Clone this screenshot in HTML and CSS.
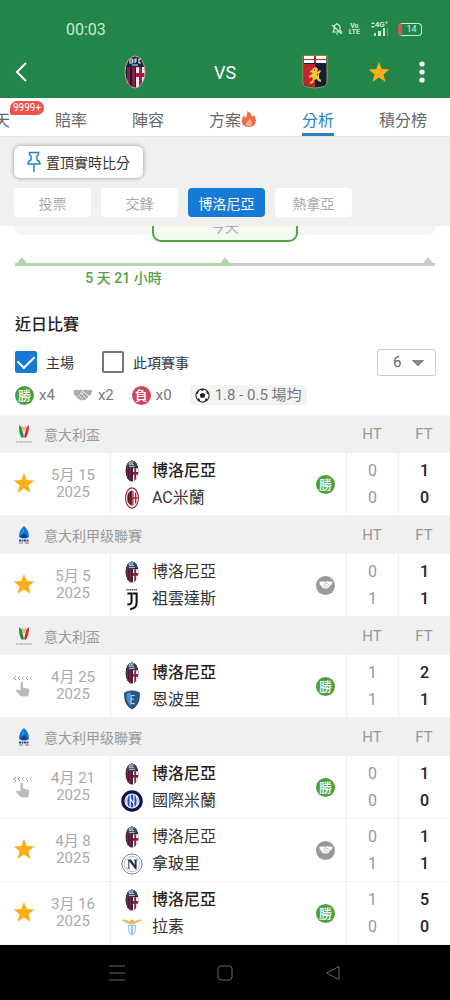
FILE: index.html
```html
<!DOCTYPE html>
<html lang="zh-Hant">
<head>
    <meta charset="UTF-8">
    <meta name="viewport" content="width=device-width, initial-scale=1.0">
    <title>博洛尼亞 VS 熱拿亞</title>
    <link rel="stylesheet" href="styles.css">
</head>
<body>
    <!-- Shared icons -->
    <svg class="sprite" aria-hidden="true">
        <symbol id="star" viewBox="0 0 24 24">
            <path fill="#ffae16" d="M12 1l3 7.700 8.200.5-6.300 5.300 2.100 8-7-4.500-7 4.500 2.100-8L.8 9.200 9 8.700z"/>
        </symbol>
        <symbol id="bologna" viewBox="0 0 22 34">
            <clipPath id="bologna-shape"><ellipse cx="11" cy="17" rx="10" ry="16"/></clipPath>
            <g clip-path="url(#bologna-shape)">
                <path fill="#171d38" d="M0 0h22v34H0z"/>
                <path fill="#8e1c3c" d="M3 12h3v22H3zM8 12h3v22H8z"/>
                <path fill="#f3eef0" d="M12 12h10v22H12z"/>
                <path fill="#a31e42" d="M15 12h3v22h-3zM12 18h10v4H12z"/>
                <path fill="#172a43" d="M0 0h22v9q-11 7-22 0z"/>
            </g>
            <path fill="none" stroke="#dfe6ef" stroke-width="1.200" d="M6 4v4h2q2-1 0-2 2-1 0-2zM13 4h-2v4M11 6h2M17 4h-2v4h2M8 10h6"/>
            <ellipse cx="11" cy="17" rx="10" ry="16" fill="none" stroke="#c8a5a5" stroke-width="1"/>
        </symbol>
        <symbol id="bologna-small" viewBox="0 0 16 24">
            <clipPath id="small-shape"><ellipse cx="8" cy="12" rx="7" ry="11.500"/></clipPath>
            <g clip-path="url(#small-shape)">
                <path fill="#1d2238" d="M0 0h16v24H0z"/>
                <path fill="#8e1c3c" d="M2 7h2v17H2zM5 7h2v17H5z"/>
                <path fill="#fff" d="M9 9h7v15H9z"/>
                <path fill="#8e1c3c" d="M10.500 9h2v15h-2zM9 13h7v3H9z"/>
                <path fill="#35495f" d="M0 0h16v6q-8 5-16 0z"/>
                <path fill="none" stroke="#c4d3df" d="M5 2v3h2V2zM10 2H8v3h2M5 7h6"/>
            </g>
        </symbol>
        <symbol id="genoa" viewBox="0 0 26 34">
            <path fill="#111f3e" stroke="#b59743" d="M1 1h24v26q0 4-5 5l-7 1-7-1q-5-1-5-5z"/>
            <path fill="#c3252e" d="M2 9h11v23l-7-1q-4-1-4-4z"/>
            <path fill="#fff" d="M2 1h22v7H2z"/>
            <path fill="#c3252e" d="M2 4h22v1H2zM12 1h2v7h-2z"/>
            <path fill="#f6c62c" d="M11 13l3-1 2 2-1 3 3-2 1 1-2 3v4l2 2v2l-3-1-1-2-3 1-1 3-3 1v-2l2-1 1-3-2-1-2 1v-2l3-2 1-1-2-1-1 1v-2l2-1z"/>
            <path fill="#a95f1e" d="M12 14h1v2h-1zM14 20l2-2v3z"/>
        </symbol>
        <symbol id="milan" viewBox="0 0 16 24">
            <ellipse cx="8" cy="12" rx="7" ry="11" fill="#fff" stroke="#a2202b" stroke-width="1.200"/>
            <path fill="#bb1d28" d="M8 3.500v17C1 19 1 5 8 3.500z"/>
            <path stroke="#251d20" d="M4 7v10M6.500 5v14"/>
            <path stroke="#bb1d28" stroke-width="1.500" d="M9 4v16M12 6v12M8 12h6"/>
        </symbol>
        <symbol id="juventus" viewBox="0 0 16 26">
            <path fill="none" stroke="#555" stroke-width="1.500" stroke-dasharray="1.500 .5" d="M2 3h12"/>
            <path fill="none" stroke="#111" stroke-width="2.200" d="M3 7h4.500v9q0 3-4.500 3M9 7h4v10q0 6-7 7"/>
        </symbol>
        <symbol id="empoli" viewBox="0 0 18 22">
            <path fill="#25588e" stroke="#17375f" d="M1 3q8-4 16 0 1 13-8 18Q0 16 1 3z"/>
            <path fill="#4f8bc0" d="M3 4q5-2 5-1v15Q2 13 3 4z"/>
            <path fill="none" stroke="#d9e9f6" d="M12 6H8v9h4M8 10h3"/>
        </symbol>
        <symbol id="inter" viewBox="0 0 24 24">
            <circle cx="12" cy="12" r="10" fill="#fff" stroke="#0b1646" stroke-width="3.500"/>
            <circle cx="12" cy="12" r="7" fill="#2a46c8"/>
            <path fill="none" stroke="#fff" stroke-width="1.300" d="M7.500 6q-2.500 6 0 12M10 5v14M14 5v14M16.500 6q2.500 6 0 12M10 9l4 6"/>
        </symbol>
        <symbol id="napoli" viewBox="0 0 24 24">
            <circle cx="12" cy="12" r="11" fill="#fff" stroke="#6c7a8d"/>
            <circle cx="12" cy="12" r="8.500" fill="none" stroke="#9aa6b5" stroke-width=".7"/>
            <path fill="#1c2d4a" d="M7 7h4l4 6V8h-1V7h4v1h-1v10h-1L9 9v7h1v1H7v-1h1V8H7z"/>
        </symbol>
        <symbol id="lazio" viewBox="0 0 24 20">
            <path fill="#e5c35c" d="M0 2q6-1 9 2l2-2h3l1 2q3-3 9-2-3 2-6 3l-4 2h-5L5 5Q2 4 0 2z"/>
            <path fill="#e8f5fb" stroke="#8ebbd0" d="M8 8h8v6q-1 4-4 5-3-1-4-5z"/>
            <path fill="#86c5e2" d="M11 8h2v10h-2z"/>
        </symbol>
        <symbol id="coppa" viewBox="0 0 18 20">
            <path fill="#26884a" d="M4 1.500q2 0 3 3.500l2 8-2 1Q4 11 4 1.500z"/>
            <path fill="#d82e35" d="M14 1.500q-2 0-3 3.500l-2 8 1.500 1q3.500-4 3.500-12.500z"/>
            <path fill="#e5b94a" d="M7 1l2 3 2-3v3L9 8 7 4z"/>
            <path stroke="#999" stroke-dasharray="2 .5" d="M1 18h16"/>
        </symbol>
        <symbol id="seriea" viewBox="0 0 18 20">
            <path fill="#1377d2" d="M9 1q5 4 5 11-5 3-10 0Q4 5 9 1z"/>
            <path fill="#29a9e0" d="M9 3L6 9q2 0 3-3z"/>
            <path fill="#0b3e9e" d="M9 8l-4 4q4 2 8 0z"/>
            <path stroke="#3c4778" stroke-width="2" stroke-dasharray="2 .5" d="M4 15.500h10"/>
            <path stroke="#c44" d="M10 18h4"/>
            <path stroke="#2a8" d="M4 18h4"/>
        </symbol>
        <symbol id="swipe" viewBox="0 0 20 22">
            <path fill="none" stroke="#999" d="M3 1L1 3l2 2M7 1L5 3l2 2"/>
            <path fill="none" stroke="#bbb" d="M11 1L9 3l2 2M15 1l-2 2 2 2M19 1l-2 2 2 2"/>
            <path fill="#bbb" d="M7.500 8q0-1.500 1.300-1.500T10 8v4.500l5 1q1.500.5 1.300 2L15.500 20q-.5 1.500-2 1.500H9q-1 0-2-1l-4-4.500q0-1.500 1.500-1.300l3 .8z"/>
        </symbol>
        <symbol id="handshake" viewBox="0 0 24 16">
            <path d="M0 3l4-2 2 1 3-1 3 1 3-1 3 1 2-1 4 2-3 6-2 0-1 3-2 1-2 2-2-.5-2 .5-2-1-2-1-2-2-1-2-2 0z"/>
            <path class="grip" d="M18.500 9l-5-4.200-2.500 2q-2 1-2-1l3-3M16 12l-4-3.500M6 10l2-2M8 12l2-2M10.500 13.500l1.500-2"/>
        </symbol>
    </svg>

    <header class="app-header">
        <div class="status-bar">
            <time>00:03</time>
            <div class="status-icons">
                <svg width="12" height="14" viewBox="0 0 12 14" fill="none" stroke="currentColor" stroke-width="1.200"><path d="M2 10h8.500L9 8V5.500Q9 3 6 2 3 3 3 5.500V8zM6 1v1M5 12h2M1 3l10 9"/></svg>
                <span class="volte"><span>Vo</span><span>LTE</span></span>
                <span class="signal">
                    <svg width="4" height="6" viewBox="0 0 4 6" fill="currentColor"><path d="M0 2l2-2 2 2zM0 4h4L2 6z"/></svg><span>4G⁺</span>
                    <svg width="14" height="8" viewBox="0 0 14 8" fill="currentColor"><path d="M0 5h2v3H0zM4 3h3v5H4zM9 0h2v8H9z"/><path opacity=".4" d="M13 0h1v8h-1z"/></svg>
                </span>
                <span class="battery">14</span>
            </div>
        </div>
        <div class="match-bar">
            <button class="back" aria-label="返回"><svg width="12" height="20" viewBox="0 0 12 20" fill="none" stroke="#fff" stroke-width="2"><path d="M11 1L2 10l9 9"/></svg></button>
            <svg width="22" height="34"><use href="#bologna"/></svg>
            <span class="versus">VS</span>
            <svg width="26" height="34"><use href="#genoa"/></svg>
            <button aria-label="收藏"><svg width="22" height="22"><use href="#star"/></svg></button>
            <button class="more" aria-label="更多"><svg width="6" height="24" viewBox="0 0 6 24" fill="#fff"><circle cx="3" cy="4" r="2.600"/><circle cx="3" cy="12" r="2.600"/><circle cx="3" cy="20" r="2.600"/></svg></button>
        </div>
    </header>

    <nav class="tabs">
        <a href="#">天<span class="count">9999+</span></a>
        <a href="#">賠率</a>
        <a href="#">陣容</a>
        <a href="#">方案<svg width="16" height="18" viewBox="0 0 16 18"><path fill="#ed6c43" d="M6 1q5 2 5 6l2-2q3 5 1 9-2 3-6 3-5 0-7-4-1-4 2-8l1 3Q7 5 6 1z"/><path fill="#f9b394" d="M8 8q4 4 2 8H6q-2-2 0-4 2-1 2-4z"/></svg></a>
        <a href="#" class="active">分析</a>
        <a href="#">積分榜</a>
    </nav>

    <div class="toolbar">
        <button class="pin">
            <svg width="14" height="22" viewBox="0 0 14 22" fill="none" stroke="#2683cb" stroke-width="1.500"><path d="M2.500 1.500h9v2L10 5v4q3 1 3 4H1q0-3 3-4V5L2.500 3.500zM7 13v8"/></svg>
            置頂實時比分
        </button>
        <div class="chips">
            <button>投票</button>
            <button>交鋒</button>
            <button class="selected">博洛尼亞</button>
            <button>熱拿亞</button>
        </div>
    </div>

    <main>
        <section class="schedule">
            <div class="days">
                <div class="days-track"></div>
                <div class="today">今天</div>
                <div class="days-track last"></div>
            </div>
            <div class="timeline">
                <span></span><span></span><span class="end"></span>
            </div>
            <p class="countdown">5 天 21 小時</p>
        </section>

        <section class="recent">
            <h2>近日比賽</h2>
            <form class="filters">
                <label><input type="checkbox" checked>主場</label>
                <label><input type="checkbox">此項賽事</label>
                <select aria-label="場數"><option>6</option></select>
            </form>
            <div class="summary">
                <span><i class="result win">勝</i>x4</span>
                <span><svg class="shake" width="20" height="14"><use href="#handshake"/></svg>x2</span>
                <span><i class="result loss">負</i>x0</span>
                <span class="average"><svg width="15" height="15" viewBox="0 0 16 16"><circle cx="8" cy="8" r="7" fill="#fff" stroke="#333" stroke-width="1.200"/><path fill="#222" d="M8 5l3 2-1 3.500H6L5 7zM5 1.500L8 3l3-1.500-3-1zM1 6l2 .5L4 3.500 3 3zM15 6l-2 .5-1-3 1-.5zM3 11l2 .5.5 3L3 13zM13 11l-2 .5-.5 3L13 13z"/></svg>1.8 - 0.5 場均</span>
            </div>

            <table class="matches">
                <colgroup>
                    <col class="col-fav"><col class="col-date"><col><col class="col-result"><col class="col-score"><col class="col-score">
                </colgroup>
                <tbody>
                    <tr class="league">
                        <th colspan="4"><div><svg width="18" height="20"><use href="#coppa"/></svg>意大利盃</div></th>
                        <th>HT</th><th>FT</th>
                    </tr>
                    <tr>
                        <td class="fav"><button aria-label="收藏"><svg width="22" height="22"><use href="#star"/></svg></button></td>
                        <td class="date">5月 15<br>2025</td>
                        <td class="teams">
                            <div class="winner"><svg width="16" height="22"><use href="#bologna-small"/></svg>博洛尼亞</div>
                            <div><svg width="16" height="22"><use href="#milan"/></svg>AC米蘭</div>
                        </td>
                        <td><i class="result win">勝</i></td>
                        <td class="ht">0<br>0</td>
                        <td class="ft">1<br>0</td>
                    </tr>
                </tbody>
                <tbody>
                    <tr class="league">
                        <th colspan="4"><div><svg width="18" height="20"><use href="#seriea"/></svg>意大利甲级聯賽</div></th>
                        <th>HT</th><th>FT</th>
                    </tr>
                    <tr>
                        <td class="fav"><button aria-label="收藏"><svg width="22" height="22"><use href="#star"/></svg></button></td>
                        <td class="date">5月 5<br>2025</td>
                        <td class="teams">
                            <div><svg width="16" height="22"><use href="#bologna-small"/></svg>博洛尼亞</div>
                            <div><svg width="16" height="24"><use href="#juventus"/></svg>祖雲達斯</div>
                        </td>
                        <td><i class="result draw"><svg width="14" height="10"><use href="#handshake"/></svg></i></td>
                        <td class="ht">0<br>1</td>
                        <td class="ft">1<br>1</td>
                    </tr>
                </tbody>
                <tbody>
                    <tr class="league">
                        <th colspan="4"><div><svg width="18" height="20"><use href="#coppa"/></svg>意大利盃</div></th>
                        <th>HT</th><th>FT</th>
                    </tr>
                    <tr>
                        <td class="fav"><svg width="20" height="22"><use href="#swipe"/></svg></td>
                        <td class="date">4月 25<br>2025</td>
                        <td class="teams">
                            <div class="winner"><svg width="16" height="22"><use href="#bologna-small"/></svg>博洛尼亞</div>
                            <div><svg width="18" height="20"><use href="#empoli"/></svg>恩波里</div>
                        </td>
                        <td><i class="result win">勝</i></td>
                        <td class="ht">1<br>1</td>
                        <td class="ft">2<br>1</td>
                    </tr>
                </tbody>
                <tbody>
                    <tr class="league">
                        <th colspan="4"><div><svg width="18" height="20"><use href="#seriea"/></svg>意大利甲级聯賽</div></th>
                        <th>HT</th><th>FT</th>
                    </tr>
                    <tr>
                        <td class="fav"><svg width="20" height="22"><use href="#swipe"/></svg></td>
                        <td class="date">4月 21<br>2025</td>
                        <td class="teams">
                            <div class="winner"><svg width="16" height="22"><use href="#bologna-small"/></svg>博洛尼亞</div>
                            <div><svg width="22" height="22"><use href="#inter"/></svg>國際米蘭</div>
                        </td>
                        <td><i class="result win">勝</i></td>
                        <td class="ht">0<br>0</td>
                        <td class="ft">1<br>0</td>
                    </tr>
                    <tr>
                        <td class="fav"><button aria-label="收藏"><svg width="22" height="22"><use href="#star"/></svg></button></td>
                        <td class="date">4月 8<br>2025</td>
                        <td class="teams">
                            <div><svg width="16" height="22"><use href="#bologna-small"/></svg>博洛尼亞</div>
                            <div><svg width="22" height="22"><use href="#napoli"/></svg>拿玻里</div>
                        </td>
                        <td><i class="result draw"><svg width="14" height="10"><use href="#handshake"/></svg></i></td>
                        <td class="ht">0<br>1</td>
                        <td class="ft">1<br>1</td>
                    </tr>
                    <tr>
                        <td class="fav"><button aria-label="收藏"><svg width="22" height="22"><use href="#star"/></svg></button></td>
                        <td class="date">3月 16<br>2025</td>
                        <td class="teams">
                            <div class="winner"><svg width="16" height="22"><use href="#bologna-small"/></svg>博洛尼亞</div>
                            <div><svg width="22" height="18"><use href="#lazio"/></svg>拉素</div>
                        </td>
                        <td><i class="result win">勝</i></td>
                        <td class="ht">1<br>0</td>
                        <td class="ft">5<br>0</td>
                    </tr>
                </tbody>
            </table>
        </section>
    </main>

    <footer class="system-nav">
        <button aria-label="選單"><svg width="16" height="16" viewBox="0 0 16 16"><path d="M0 1h16M0 8h16M0 15h16"/></svg></button>
        <button aria-label="主畫面"><svg width="16" height="16" viewBox="0 0 16 16"><rect x="1" y="1" width="14" height="14" rx="3"/></svg></button>
        <button aria-label="返回上一頁"><svg width="16" height="16" viewBox="0 0 16 16"><path d="M14 1.500v13L1.500 8z"/></svg></button>
    </footer>
</body>
</html>
```

FILE: styles.css
```css
* {
    box-sizing: border-box;
}

body {
    margin: 0;
    font-family: Roboto, "Noto Sans CJK TC", sans-serif;
    font-size: 14px;
    color: #333;
    background: #fff;
}

button {
    padding: 0;
    border: none;
    background: none;
    font: inherit;
    cursor: pointer;
}

svg {
    display: block;
    flex: none;
}

.sprite {
    position: absolute;
    width: 0;
    height: 0;
}

/* Header */
.app-header {
    height: 98px;
    padding-top: 18px;
    background: #238549;
    color: #fff;
}

.status-bar {
    display: flex;
    justify-content: space-between;
    align-items: center;
    height: 22px;
    padding: 0 28px 0 66px;
    color: #c5f0cf;
}

.status-bar time {
    font-size: 16px;
}

.status-icons {
    display: flex;
    align-items: center;
    gap: 6px;
}

.volte {
    display: flex;
    flex-direction: column;
    align-items: center;
    font-size: 7px;
    font-weight: 700;
    line-height: 6px;
}

.signal {
    display: flex;
    flex-wrap: wrap;
    justify-content: flex-end;
    width: 22px;
    font-size: 8px;
    font-weight: 700;
    line-height: 6px;
}

.battery {
    width: 24px;
    margin-left: 4px;
    border: 1px solid #c5f0cf;
    border-left: 4px solid #d65454;
    border-radius: 4px;
    font-size: 9px;
    line-height: 11px;
    text-align: center;
}

.match-bar {
    display: grid;
    grid-template-columns: repeat(4, 1fr) 38px 52px;
    align-items: center;
    justify-items: center;
    height: 64px;
}

.match-bar .back {
    justify-self: start;
    padding-left: 15px;
}

.match-bar .more {
    padding-right: 4px;
}

.versus {
    font-size: 18px;
}

/* Tabs */
.tabs {
    display: flex;
    justify-content: flex-end;
    gap: 45px;
    height: 39px;
    padding-right: 23px;
    overflow: hidden;
    border-bottom: 1px solid #e4e4e4;
}

.tabs a {
    position: relative;
    display: flex;
    flex: none;
    align-items: center;
    padding-top: 6px;
    border-bottom: 3px solid transparent;
    color: #666;
    font-size: 16px;
    text-decoration: none;
}

.tabs .active {
    border-color: #2b7fc4;
    color: #2b7fc4;
}

.count {
    position: absolute;
    top: 3px;
    left: 16px;
    padding: 0 3px;
    border-radius: 7px 7px 7px 2px;
    background: #f4504f;
    color: #fff;
    font-size: 10px;
    line-height: 14px;
}

/* Pin button and team filter */
.toolbar {
    height: 89px;
    padding: 9px 14px;
    background: #f0f0f0;
}

.pin {
    display: flex;
    align-items: center;
    gap: 5px;
    height: 32px;
    padding: 0 13px;
    border-radius: 6px;
    background: #fff;
    box-shadow: 0 0 4px rgba(0, 0, 0, 0.4);
    color: #333;
}

.chips {
    display: flex;
    gap: 10px;
    margin-top: 10px;
}

.chips button {
    width: 77px;
    height: 29px;
    border-radius: 4px;
    background: #fff;
    color: #aaa;
}

.chips .selected {
    background: #167bd6;
    color: #fff;
}

/* Schedule strip, cut off by the toolbar */
.days {
    display: flex;
    align-items: flex-end;
    height: 16px;
    padding: 0 15px;
    overflow: hidden;
}

.days-track {
    flex: 1;
    height: 24px;
    margin-bottom: 7px;
    border-radius: 0 0 0 8px;
    background: #f5f5f5;
}

.days-track.last {
    border-radius: 0 0 8px 0;
}

.today {
    width: 146px;
    height: 32px;
    border: 2px solid #54a045;
    border-radius: 9px;
    background: #f1fcee;
    color: #aaa;
    line-height: 30px;
    text-align: center;
}

.timeline {
    display: flex;
    justify-content: space-between;
    margin: 15px 15px 0;
    background: linear-gradient(to right, #b5d6a7 50%, #ccc 50%) no-repeat bottom / 100% 3px;
}

.timeline span {
    border: 7px solid transparent;
    border-top: none;
    border-bottom: 9px solid #b5d6a7;
}

.timeline .end {
    border-bottom-color: #ccc;
}

.countdown {
    width: 50%;
    margin: 2px 0 0;
    padding-left: 22px;
    color: #54a045;
    font-weight: 500;
    line-height: 20px;
    text-align: center;
}

/* Recent matches */
h2 {
    margin: 25px 15px 0;
    color: #222;
    font-size: 16px;
    font-weight: 500;
    line-height: 24px;
}

.filters {
    display: flex;
    align-items: center;
    gap: 28px;
    height: 28px;
    margin: 11px 14px 0 15px;
}

.filters label {
    display: flex;
    align-items: center;
    gap: 9px;
}

.filters input {
    appearance: none;
    width: 22px;
    height: 22px;
    margin: 0;
    border: 2px solid #777;
    border-radius: 2px;
}

.filters input:checked {
    display: grid;
    place-items: center;
    border-color: #167bd6;
    background: #167bd6;
}

.filters input:checked::after {
    content: "";
    width: 14px;
    height: 8px;
    margin-bottom: 4px;
    border: solid #fff;
    border-width: 0 0 2px 2px;
    transform: rotate(-45deg);
}

.filters select {
    appearance: none;
    width: 59px;
    height: 27px;
    margin-left: auto;
    padding: 0 15px;
    border: 1px solid #ccc;
    border-radius: 3px;
    background: conic-gradient(from -45deg at 50% 100%, #888 90deg, transparent 90deg) no-repeat 34px 10px / 12px 6px;
    color: #666;
    font: inherit;
    font-size: 15px;
}

.summary {
    display: flex;
    gap: 18px;
    height: 20px;
    margin: 9px 15px 10px;
    color: #777;
    font-size: 15px;
    line-height: 20px;
}

.summary span {
    display: flex;
    align-items: center;
    gap: 5px;
}

.summary .average {
    padding: 0 5px;
    border-radius: 2px;
    background: #f3f3f3;
}

.shake {
    fill: #aaa;
    stroke: #fff;
}

.grip {
    fill: none;
    stroke-width: 1;
}

.result {
    display: flex;
    align-items: center;
    justify-content: center;
    width: 19px;
    height: 19px;
    border-radius: 50%;
    color: #fff;
    font-size: 13px;
    font-style: normal;
    font-weight: 500;
    line-height: 19px;
}

.win {
    background: #4ba03e;
}

.loss {
    background: #cf4559;
}

.draw {
    background: #999;
    fill: #fff;
    stroke: #999;
}

.matches {
    width: 100%;
    border-spacing: 0;
    table-layout: fixed;
}

.col-fav {
    width: 48px;
}

.col-date {
    width: 62px;
}

.col-result {
    width: 40px;
}

.col-score {
    width: 52px;
}

.league th {
    height: 38px;
    padding: 0;
    background: #f0f0f0;
    color: #999;
    font-size: 15px;
    font-weight: 400;
}

.league div {
    display: flex;
    align-items: center;
    gap: 11px;
    padding-left: 15px;
    font-size: 14px;
}

.matches td {
    height: 63px;
    padding: 0;
    border-bottom: 1px solid #f3f3f3;
}

.fav svg {
    margin-left: 13px;
}

.matches .date {
    padding-right: 12px;
    color: #aaa;
    font-size: 15px;
    line-height: 17px;
    text-align: center;
    white-space: nowrap;
}

.teams,
.ht,
.ft {
    border-left: 1px solid #eee;
    font-size: 16px;
    line-height: 27px;
}

.teams div {
    display: grid;
    grid-template-columns: 41px 1fr;
    align-items: center;
    height: 27px;
    color: #333;
}

.teams svg {
    justify-self: center;
}

.teams .winner {
    color: #222;
    font-weight: 500;
}

.ht,
.ft {
    text-align: center;
}

.ht {
    color: #999;
}

.ft {
    color: #222;
    font-weight: 500;
}

.matches .result {
    margin-left: 10px;
}

/* Android navigation */
.system-nav {
    display: flex;
    align-items: center;
    justify-content: center;
    gap: 92px;
    height: 55px;
    background: #000;
}

.system-nav svg {
    fill: none;
    stroke: #666;
}
```
